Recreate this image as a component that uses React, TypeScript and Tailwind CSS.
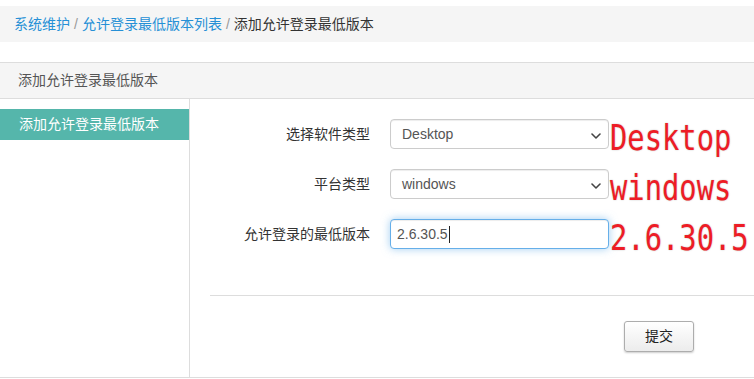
import React from "react";

const Chevron = () => (
  <svg width="10" height="6" viewBox="0 0 10 6" className="absolute right-[7px] top-[13px]">
    <path d="M1 1 L5 5 L9 1" fill="none" stroke="#444" strokeWidth="1.6" strokeLinecap="round" strokeLinejoin="round" />
  </svg>
);

const FakeSelect = ({ value }: { value: string }) => (
  <div className="relative h-[30px] w-[219px] rounded-[4px] border border-[#ccc] bg-white flex items-center pl-[11px] text-[14px] text-[#555] shadow-[inset_0_1px_1px_rgba(0,0,0,0.075)]">
    {value}
    <Chevron />
  </div>
);

export default function App() {
  return (
    <div
      className="relative w-[754px] h-[379px] overflow-hidden bg-white text-[14px] text-[#333]"
      style={{ fontFamily: '"Liberation Sans", "Noto Sans CJK SC", sans-serif' }}
    >
      <div className="pt-[6px]">
        <div className="h-[36px] bg-[#f5f5f5] flex items-center pl-[14px] gap-[4px]">
          <span className="text-[#2690d6]">系统维护</span>
          <span className="text-[#999]">/</span>
          <span className="text-[#2690d6]">允许登录最低版本列表</span>
          <span className="text-[#999]">/</span>
          <span className="text-[#333]">添加允许登录最低版本</span>
        </div>
      </div>

      <div className="mt-[20px] border-t border-b border-[#ddd]">
        <div className="h-[36px] bg-[#f5f5f5] border-b border-[#ddd] flex items-center pl-[18px] text-[#555]">
          添加允许登录最低版本
        </div>
        <div className="flex h-[278px]">
          <div className="w-[190px] border-r border-[#ddd] pt-[10px]">
            <div className="h-[31px] bg-[#55b6ab] text-white flex items-center pl-[19px]">
              添加允许登录最低版本
            </div>
          </div>
          <div className="flex-1 pl-[20px] pt-[20px]">
            <div className="flex flex-col gap-[20px]">
              <div className="flex items-center">
                <div className="w-[160px] text-right">选择软件类型</div>
                <div className="ml-[20px]"><FakeSelect value="Desktop" /></div>
              </div>
              <div className="flex items-center">
                <div className="w-[160px] text-right">平台类型</div>
                <div className="ml-[20px]"><FakeSelect value="windows" /></div>
              </div>
              <div className="flex items-center">
                <div className="w-[160px] text-right">允许登录的最低版本</div>
                <div className="ml-[20px]">
                  <div className="h-[30px] w-[219px] rounded-[4px] border border-[#66afe9] bg-white flex items-center pl-[6px] text-[14px] text-[#555] shadow-[inset_0_1px_1px_rgba(0,0,0,0.075),0_0_8px_rgba(102,175,233,0.6)]">
                    2.6.30.5
                    <span className="ml-[1px] inline-block w-[1px] h-[17px] bg-[#222]" />
                  </div>
                </div>
              </div>
            </div>
            <div className="mt-[46px] border-t border-[#ddd]" />
            <div className="pt-[25px] pl-[414px]">
              <button className="w-[70px] h-[31px] rounded-[3px] border border-[#adadad] bg-gradient-to-b from-white to-[#ececec] text-[14px] text-[#222] shadow-[0_1px_2px_rgba(0,0,0,0.2)]">
                提交
              </button>
            </div>
          </div>
        </div>
      </div>

      <div
        className="absolute left-[610px] top-[113px] flex flex-col text-[36px] leading-[50px] text-[#ee1c25] origin-left scale-x-[0.8]"
        style={{ fontFamily: '"DejaVu Sans Mono", monospace', textShadow: "0 0 2px #ccc, 0 0 1px #ddd" }}
      >
        <span>Desktop</span>
        <span>windows</span>
        <span>2.6.30.5</span>
      </div>
    </div>
  );
}
